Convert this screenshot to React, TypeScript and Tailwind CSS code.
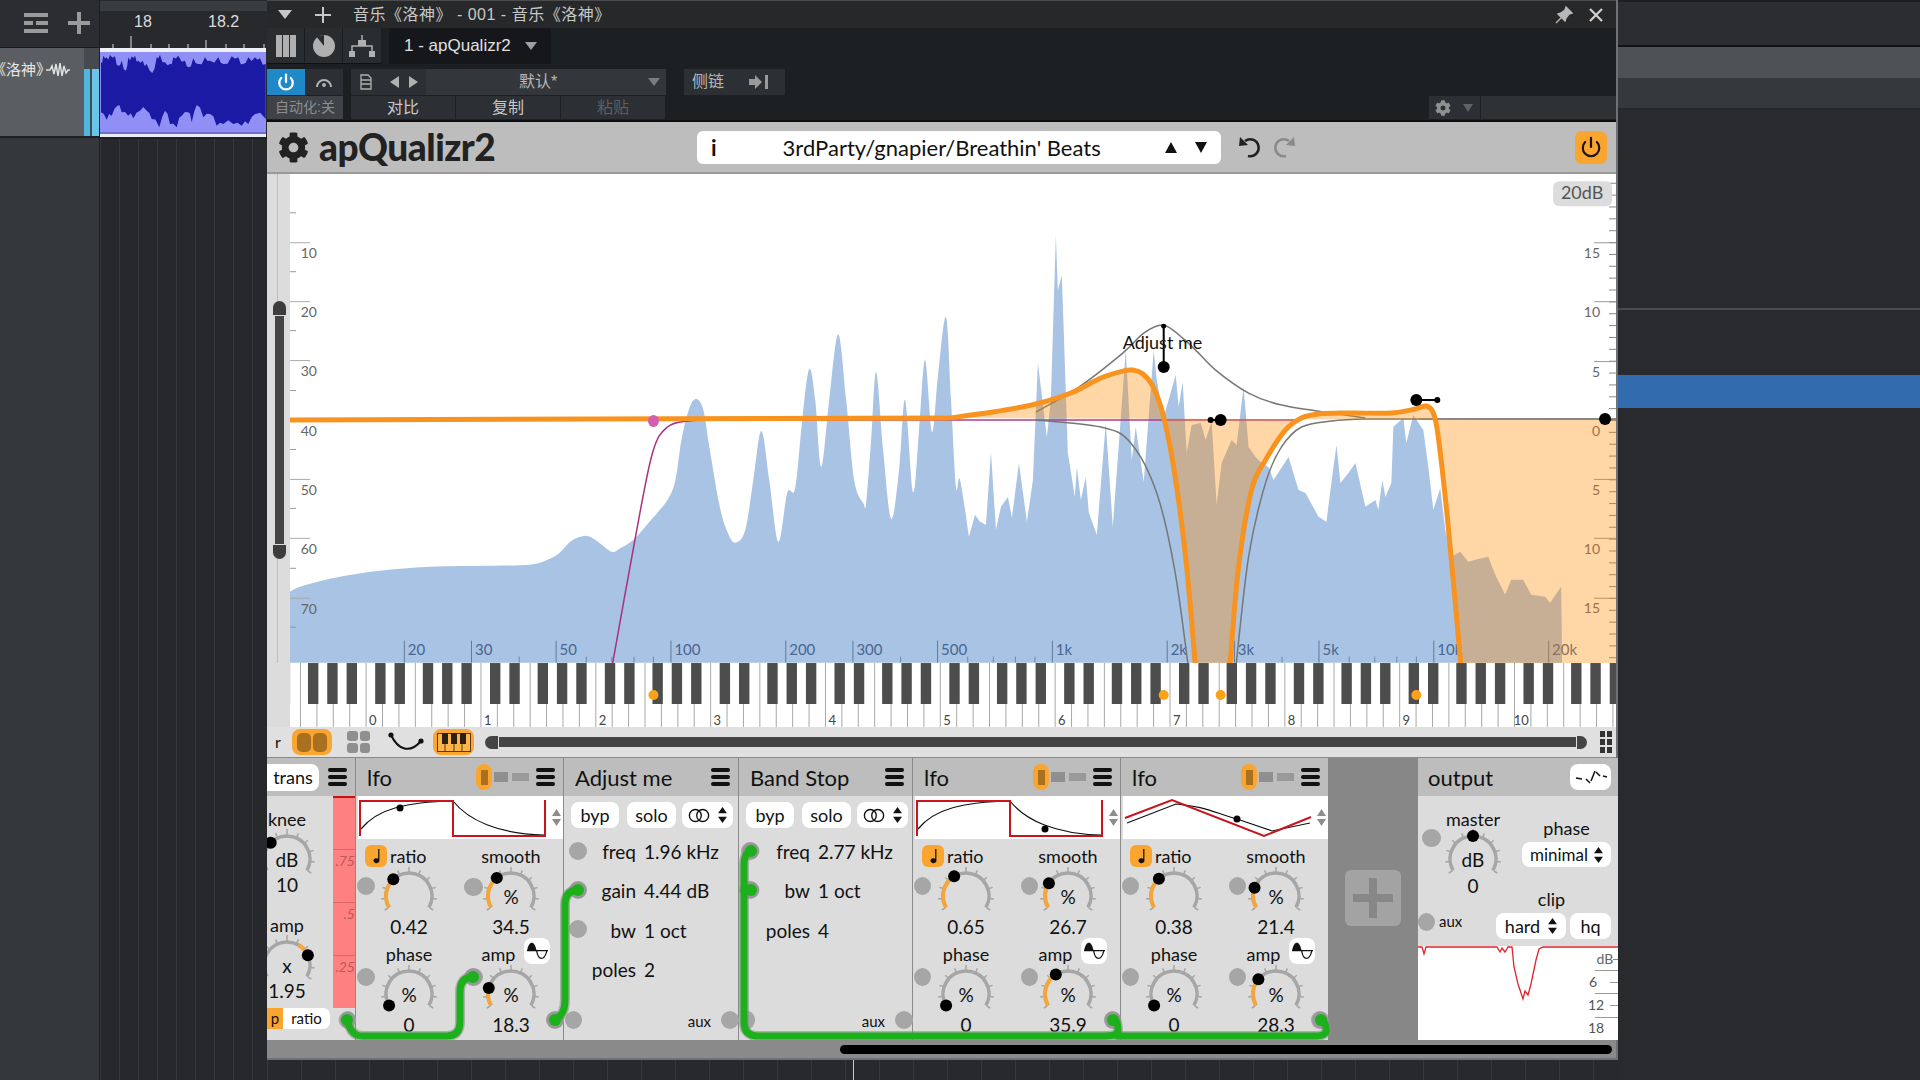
import { Power } from "lucide-react";
import { FaCog } from "react-icons/fa";

type Pt = number[];

// Catmull-Rom through the points
const curve = (p: Pt[]) => {
  let d = `M${p[0][0]} ${p[0][1]}`;
  for (let i = 0; i < p.length - 1; i++) {
    const a = p[Math.max(i - 1, 0)];
    const b = p[i];
    const c = p[i + 1];
    const e = p[Math.min(i + 2, p.length - 1)];
    d += ` C${(b[0] + (c[0] - a[0]) / 6).toFixed(1)} ${(b[1] + (c[1] - a[1]) / 6).toFixed(1)} ${(c[0] - (e[0] - b[0]) / 6).toFixed(1)} ${(c[1] - (e[1] - b[1]) / 6).toFixed(1)} ${c[0]} ${c[1]}`;
  }
  return d;
};
const line = (p: Pt[]) => p.map((q) => `L${q[0]} ${q[1]}`).join(" ");

const spectrumSmooth: Pt[] = [
  [290, 592], [303, 586], [340, 577], [380, 571], [430, 567], [490, 566], [530, 565], [548, 560], [560, 553], [572, 541], [586, 536], [597, 541], [612, 552], [620, 549], [634, 540], [650, 522], [668, 500], [676, 480], [682, 440], [690, 408], [697, 399], [704, 410], [710, 447], [720, 505], [728, 532], [736, 543], [746, 530], [754, 480], [762, 431], [770, 480], [779, 542], [788, 493], [796, 488], [803, 420], [810, 369], [816, 400], [822, 467], [830, 400], [839, 334], [847, 400], [855, 480], [864, 503], [867, 503], [872, 440], [877, 372], [884, 450], [892, 519], [900, 470], [906, 400], [914, 492], [920, 430], [926, 360], [933, 432], [939, 375], [947, 317], [952, 400], [957, 487], [961, 480], [970, 537],
];
const spectrumJagged: Pt[] = [
  [976, 515], [981, 522], [987, 525], [992, 452], [997, 530], [1002, 507], [1009, 497], [1013, 518], [1020, 463], [1028, 522], [1034, 480], [1039, 363], [1048, 437], [1052, 400], [1057, 235], [1059, 290], [1063, 275], [1069, 453], [1076, 497], [1078, 467], [1082, 500], [1087, 477], [1090, 513], [1098, 535], [1107, 423], [1114, 527], [1127, 350], [1133, 460], [1137, 427], [1145, 482], [1155, 350], [1158, 380], [1165, 417], [1177, 375], [1180, 407], [1184, 382], [1188, 453], [1193, 425], [1202, 423], [1207, 440], [1213, 422], [1218, 505], [1223, 463], [1233, 440], [1238, 445], [1245, 387], [1250, 447], [1257, 457], [1263, 463], [1270, 467], [1275, 480], [1290, 457], [1300, 490], [1307, 493], [1320, 517], [1328, 522], [1332, 490], [1338, 445], [1342, 483], [1350, 473], [1357, 463], [1367, 507], [1377, 500], [1380, 510], [1384, 480], [1387, 497], [1393, 483], [1395, 427], [1405, 418], [1408, 443], [1415, 415], [1425, 430], [1430, 467], [1435, 510], [1442, 488], [1447, 530], [1453, 557], [1462, 552], [1470, 562], [1477, 560], [1490, 557], [1497, 575], [1507, 595], [1513, 580], [1525, 580], [1533, 595], [1547, 597], [1552, 603], [1563, 587], [1564, 663],
];
const eqFall: Pt[] = [
  [950, 418], [994, 412], [1037, 404], [1072, 393], [1102, 378], [1124, 371], [1134, 370], [1143, 373], [1154, 386], [1165, 417], [1177, 480], [1188, 567], [1197, 670],
];
const eqRise: Pt[] = [
  [1231, 670], [1240, 567], [1253, 490], [1267, 460], [1287, 430], [1303, 418], [1320, 414], [1350, 413], [1393, 413], [1417, 409], [1428, 406], [1435, 413], [1440, 437], [1450, 527], [1463, 670],
];
const highpass: Pt[] = [[612, 670], [636, 537], [653, 453], [668, 427], [690, 421], [720, 420]];
const stopFall: Pt[] = [[1037, 420], [1102, 427], [1132, 443], [1158, 493], [1176, 570], [1190, 670]];
const stopRise: Pt[] = [[1237, 670], [1250, 557], [1267, 483], [1283, 447], [1303, 427], [1333, 421], [1367, 419], [1420, 419]];
const peak: Pt[] = [[1037, 412], [1080, 387], [1124, 353], [1145, 333], [1165, 325], [1184, 338], [1197, 350], [1217, 370], [1250, 393], [1283, 405], [1333, 413], [1367, 418]];

const freqX = (f: number) => 404 + Math.log10(f / 20) * 382;
const xLabels: [number, string][] = [
  [20, "20"], [30, "30"], [50, "50"], [100, "100"], [200, "200"], [300, "300"], [500, "500"], [1000, "1k"], [2000, "2k"], [3000, "3k"], [5000, "5k"], [10000, "10k"], [20000, "20k"],
];
const xMinor = [40, 60, 70, 80, 90, 400, 600, 700, 800, 900, 4000, 6000, 7000, 8000, 9000];

const minorDb = Array.from({ length: 41 }, (_, i) => 420 + (i - 20) * 11.88);

const Chart = () => (
  <svg viewBox="290 174 1328 489" className="block w-[1328px] h-[489px] bg-white">
    <path d={`${curve(spectrumSmooth)} ${line(spectrumJagged)} L290 663 Z`} fill="#a8c3e3" />
    {[212, 271, 330, 390, 449, 508, 568, 627].map((y) => (
      <rect key={y} x="290" y={y} width="6" height="1" fill="#999" />
    ))}
    {[242, 301, 360, 479, 538, 598].map((y) => (
      <rect key={y} x="290" y={y} width="20" height="1" fill="#aaa" />
    ))}
    {[["10", 253], ["20", 312], ["30", 371], ["40", 431], ["50", 490], ["60", 549], ["70", 609]].map(([t, y]) => (
      <text key={t} x="317" y={Number(y) + 5} textAnchor="end" fontSize="14" fill="#666">{t}</text>
    ))}
    {minorDb.map((y) => (
      <rect key={y} x="1611" y={y} width="7" height="1" fill="#888" />
    ))}
    {[242, 301, 361, 479, 538, 598].map((y) => (
      <rect key={y} x="1596" y={y} width="22" height="1" fill="#999" />
    ))}
    {[["15", 253], ["10", 312], ["5", 372], ["0", 431], ["5", 490], ["10", 549], ["15", 608]].map(([t, y], i) => (
      <text key={i} x="1602" y={Number(y) + 5} textAnchor="end" fontSize="14" fill="#666">{t}</text>
    ))}
    {xLabels.map(([f, t]) => (
      <g key={t}>
        <rect x={freqX(f)} y="641" width="1" height="22" fill="#5f7a9e" />
        <text x={freqX(f) + 4} y="655" fontSize="15" fill="#4a6690">{t}</text>
      </g>
    ))}
    {xMinor.map((f) => (
      <rect key={f} x={freqX(f)} y="657" width="1" height="6" fill="#6f88a8" />
    ))}
    <path d="M720 420 L1300 420" stroke="#b03a8e" strokeWidth="1.5" />
    <path d={curve(highpass)} fill="none" stroke="#a8327f" strokeWidth="1.5" />
    <path d={curve(stopFall)} fill="none" stroke="#777" strokeWidth="1.5" />
    <path d={curve(stopRise)} fill="none" stroke="#777" strokeWidth="1.5" />
    <path d={curve(peak)} fill="none" stroke="#777" strokeWidth="1.5" />
    <path d="M1420 419 L1618 419" stroke="#888" strokeWidth="2" />
    <path
      d={`${curve(eqFall)} ${curve(eqRise).replace("M", "L")} L1618 670 L1618 420 Z`}
      fill="#ff8a00"
      fillOpacity="0.35"
    />
    <path d="M290 420 L950 418" stroke="#f7931e" strokeWidth="5" fill="none" />
    <path d={curve(eqFall)} fill="none" stroke="#f7931e" strokeWidth="5" />
    <path d={curve(eqRise)} fill="none" stroke="#f7931e" strokeWidth="5" />
    <ellipse cx="654" cy="421" rx="5.5" ry="6" fill="#d45fb0" />
    <rect x="1164" y="325" width="2" height="42" fill="#000" />
    <circle cx="1165" cy="326" r="2.5" fill="#000" />
    <circle cx="1165" cy="367" r="6" fill="#000" />
    <circle cx="1212" cy="420" r="3" fill="#000" />
    <rect x="1212" y="419" width="8" height="2" fill="#000" />
    <circle cx="1222" cy="420" r="6" fill="#000" />
    <circle cx="1418" cy="400" r="6" fill="#000" />
    <rect x="1418" y="399" width="21" height="2" fill="#000" />
    <circle cx="1439" cy="400" r="3" fill="#000" />
    <circle cx="1607" cy="419" r="6" fill="#000" />
    <text x="1124" y="349" fontSize="18" fill="#111">Adjust me</text>
    <rect x="1555" y="181" width="59" height="25" rx="6" fill="#dcdcdc" />
    <text x="1584" y="199" textAnchor="middle" fontSize="18" fill="#555">20dB</text>
  </svg>
);

const blackOffsets = [0, 19.3, 38.7, 67.3, 86.7];
const Keyboard = () => (
  <svg viewBox="290 663 1328 64" className="block w-[1328px] h-[64px] bg-white">
    {Array.from({ length: 82 }, (_, i) => (
      <rect key={i} x={300 + i * 16.43} y="663" width="1" height="64" fill="#a8a8a8" />
    ))}
    {Array.from({ length: 13 }, (_, o) =>
      blackOffsets.map((b) => (
        <rect key={`${o}-${b}`} x={193 + o * 115 + b} y="663" width="10.4" height="41" fill="#4d4d4d" />
      )),
    )}
    {Array.from({ length: 11 }, (_, i) => (
      <text key={i} x={373 + i * 115} y="725" textAnchor="middle" fontSize="13" fill="#444">{i}</text>
    ))}
    {[654, 1165, 1222, 1418].map((x) => (
      <circle key={x} cx={x} cy="695" r="5" fill="#f9a21a" />
    ))}
  </svg>
);

const Burger = () => (
  <div className="flex flex-col gap-[3px] w-[19px] shrink-0">
    <div className="h-[4px] rounded-full bg-[#111]" />
    <div className="h-[4px] rounded-full bg-[#111]" />
    <div className="h-[4px] rounded-full bg-[#111]" />
  </div>
);

const polar = (r: number, deg: number) => {
  const a = (deg * Math.PI) / 180;
  return [32 + r * Math.sin(a), 29 - r * Math.cos(a)];
};
const arc = (r: number, from: number, to: number) => {
  const [x1, y1] = polar(r, from);
  const [x2, y2] = polar(r, to);
  return `M${x1.toFixed(2)} ${y1.toFixed(2)} A${r} ${r} 0 ${to - from > 180 ? 1 : 0} 1 ${x2.toFixed(2)} ${y2.toFixed(2)}`;
};

const Knob = ({ angle, from = -120, text, cut = false }: { angle: number; from?: number; text?: string; cut?: boolean }) => (
  <svg viewBox={`0 0 64 ${cut ? 45 : 50}`} className={cut ? "block w-[64px] h-[45px] overflow-visible" : "block w-[64px] h-[50px]"}>
    <path d={arc(23, -120, 120)} fill="none" stroke="#a6a6a6" strokeWidth="3.5" />
    {Array.from({ length: 11 }, (_, i) => {
      const a = -120 + i * 24;
      const [x1, y1] = polar(24, a);
      const [x2, y2] = polar(i === 5 ? 30 : 28, a);
      return <line key={i} x1={x1} y1={y1} x2={x2} y2={y2} stroke="#a6a6a6" strokeWidth="1.5" />;
    })}
    {angle !== from && <path d={arc(23, Math.min(from, angle), Math.max(from, angle))} fill="none" stroke="#f4a63a" strokeWidth="4" />}
    {text && (
      <text x="32" y="37" textAnchor="middle" fontSize="19" fill="#111">{text}</text>
    )}
    <circle cx={polar(23, angle)[0]} cy={polar(23, angle)[1]} r="6" fill="#000" />
  </svg>
);

const SortArrows = ({ color = "#111" }: { color?: string }) => (
  <svg viewBox="0 0 10 18" className="w-[9px] h-[16px] shrink-0">
    <path d="M5 0 L10 7 L0 7 Z M5 18 L10 11 L0 11 Z" fill={color} />
  </svg>
);

const WaveIcon = () => (
  <svg viewBox="0 0 24 20" className="w-[23px] h-[19px]">
    <path d="M1 9 C3 -2 9 -2 11 9 Z" fill="#111" />
    <path d="M1 9 L23 9 M11 9 C13 20 19 20 22 9" fill="none" stroke="#111" strokeWidth="1.3" />
  </svg>
);

type LfoProps = {
  kind: "step" | "step2" | "tri";
  ratio: [number, string];
  smooth: [number, string];
  amp: [number, string];
};

const LfoShape = ({ kind }: { kind: LfoProps["kind"] }) => (
  <svg viewBox="0 0 206 43" className="block w-[206px] h-[43px] ml-[2px] bg-white">
    {kind === "tri" ? (
      <>
        <path d="M4 27 L53 8 C80 10 90 16 114 23 L149 35 L187 27" fill="none" stroke="#111" strokeWidth="1.2" />
        <path d="M2 22 L49 4 L141 40 L188 21" fill="none" stroke="#c8141c" strokeWidth="2" />
        <circle cx="114" cy="23" r="3.5" fill="#000" />
      </>
    ) : (
      <>
        <path d="M3 33 C20 12 50 6 95 5 C110 24 140 38 186 39" fill="none" stroke="#111" strokeWidth="1.2" />
        <path d="M2 40 L2 5 L95 5 L95 40 L187 40 L187 4" fill="none" stroke="#c8141c" strokeWidth="2" />
        {kind === "step" ? <circle cx="42" cy="12" r="3.5" fill="#000" /> : <circle cx="130" cy="33" r="3.5" fill="#000" />}
      </>
    )}
    <g transform="translate(194 13)">
      <path d="M4.5 0 L9 7 L0 7 Z M4.5 17 L9 10 L0 10 Z" fill="#8c8c8c" />
    </g>
  </svg>
);

const Lfo = ({ kind, ratio, smooth, amp, last = false }: LfoProps & { last?: boolean }) => (
  <div className={`${last ? "w-[207px]" : "w-[208px] border-r-[1.5px] border-[#8a8a8a]"} h-full flex flex-col shrink-0 overflow-hidden`}>
    <div className="h-[38px] bg-[#bdbdbd] flex items-center pl-[11px] pr-[8px] shrink-0">
      <span className="text-[22px]">lfo</span>
      <div className="ml-auto w-[16px] h-[26px] rounded-full bg-[#f9a52f] flex items-center justify-center">
        <div className="w-[7px] h-[15px] bg-[#a8701f]" />
      </div>
      <div className="ml-[2px] w-[14px] h-[10px] bg-[#8f8f8f]" />
      <div className="ml-[4px] w-[17px] h-[8px] bg-[#9a9a9a]" />
      <div className="ml-[7px]"><Burger /></div>
    </div>
    <div className="flex-1 bg-[#dcdcdc]">
      <LfoShape kind={kind} />
      <div className="grid grid-cols-[102px_102px] pl-[2px] mt-[6px] text-[18px] leading-[22px]">
        <div className="flex flex-col items-center">
          <div className="h-[22px] w-full flex items-center pl-[7px] gap-[3px]">
            <div className="w-[22px] h-[22px] rounded-[6px] bg-[#f9a52f] flex items-center justify-center">
              <svg viewBox="0 0 12 18" className="w-[11px] h-[15px]">
                <path d="M8 0 L9.5 0 L9.5 14 A3.6 3 0 1 1 8 11.6 Z" fill="#111" />
              </svg>
            </div>
            <span>ratio</span>
          </div>
          <Knob angle={ratio[0]} />
          <div className="h-[20px] text-[19px] leading-[20px]">{ratio[1]}</div>
          <div className="mt-[6px] h-[22px]">phase</div>
          <Knob angle={-120} text="%" />
          <div className="h-[20px] text-[19px] leading-[20px]">0</div>
        </div>
        <div className="flex flex-col items-center">
          <div className="h-[22px]">smooth</div>
          <Knob angle={smooth[0]} text="%" />
          <div className="h-[20px] text-[19px] leading-[20px]">{smooth[1]}</div>
          <div className="mt-[6px] h-[22px] w-full flex items-center justify-center gap-[9px] pl-[10px]">
            <span>amp</span>
            <div className="w-[26px] h-[26px] -mt-[6px] rounded-[8px] bg-white flex items-center justify-center">
              <WaveIcon />
            </div>
          </div>
          <Knob angle={amp[0]} text="%" />
          <div className="h-[20px] text-[19px] leading-[20px]">{amp[1]}</div>
        </div>
      </div>
    </div>
  </div>
);

const StereoBtn = ({ w }: { w: string }) => (
  <div className={`${w} h-[26px] rounded-[8px] bg-white flex items-center justify-center gap-[8px]`}>
    <svg viewBox="0 0 24 16" className="w-[22px] h-[15px]">
      <circle cx="8" cy="8" r="6.5" fill="none" stroke="#111" strokeWidth="1.5" />
      <circle cx="16" cy="8" r="6.5" fill="none" stroke="#111" strokeWidth="1.5" />
    </svg>
    <SortArrows />
  </div>
);

const Band = ({
  title,
  width,
  labelW,
  gap,
  rows,
}: {
  title: string;
  width: string;
  labelW: string;
  gap: string;
  rows: [string, string][];
}) => (
  <div className={`${width} h-full flex flex-col shrink-0 border-r-[1.5px] border-[#8a8a8a]`}>
    <div className="h-[38px] bg-[#bdbdbd] flex items-center pl-[11px] pr-[8px] shrink-0">
      <span className="text-[22px]">{title}</span>
      <div className="ml-auto"><Burger /></div>
    </div>
    <div className="flex-1 bg-[#dcdcdc] flex flex-col text-[19px]">
      <div className="flex mt-[6px] pl-[7px] text-[18px]">
        <div className="w-[48px] h-[26px] rounded-[8px] bg-white flex items-center justify-center">byp</div>
        <div className="ml-[8px] w-[49px] h-[26px] rounded-[8px] bg-white flex items-center justify-center">solo</div>
        <div className="ml-[6px]"><StereoBtn w="w-[51px]" /></div>
      </div>
      <div className="mt-[4px]">
        {rows.map(([label, value]) => (
          <div key={label} className="h-[39.5px] flex items-center">
            <div className={`${labelW} text-right`}>{label}</div>
            <div className={gap}>{value}</div>
          </div>
        ))}
      </div>
      <div className="mt-auto mb-[9px] pr-[27px] text-right text-[15px] leading-[20px]">aux</div>
    </div>
  </div>
);

// gray sockets and the green patch cables lie on top of the modules
const ports: number[][] = [
  [340, 356, 1020], [357, 375, 886], [464, 483, 887], [357, 375, 977], [464, 483, 977], [546, 564, 1020],
  [569, 587, 851], [569, 587, 890], [569, 587, 929], [565, 582, 1020], [721, 739, 1020],
  [741, 759, 851], [741, 759, 890], [741, 755, 1020], [895, 913, 1020],
  [914, 931, 886], [1021, 1038, 886], [914, 931, 977], [1021, 1038, 977], [1104, 1121, 1020],
  [1122, 1139, 886], [1229, 1246, 886], [1122, 1139, 977], [1229, 1246, 977], [1311, 1328, 1020],
  [1422, 1441, 838], [1418, 1435, 922],
];
const cables = [
  "M347 1020 Q351 1036 362 1036 L447 1036 Q460 1036 460 1022 L460 992 Q460 977 473 977",
  "M555 1020 Q565 1015 565 1000 L565 905 Q565 890 578 890",
  "M751 851 Q744 853 744 865 L744 1022 Q744 1036 758 1036 L1105 1036 Q1118 1036 1118 1030 Q1118 1020 1113 1020",
  "M751 890 L744 890",
  "M1118 1036 L1315 1036 Q1328 1036 1326 1028 Q1325 1020 1321 1020",
];
const plugs = [[347, 1020], [473, 977], [555, 1020], [578, 890], [751, 851], [751, 890], [1113, 1020], [1321, 1020]];

const Overlay = () => (
  <svg viewBox="267 758 1351 282" className="absolute left-0 top-0 w-[1351px] h-[282px] pointer-events-none">
    {ports.map(([a, b, y]) => (
      <rect key={`${a}-${y}`} x={a} y={y - 9} width={b - a} height="18" rx="9" fill="#a6a6a6" />
    ))}
    {cables.map((d) => (
      <path key={d} d={d} fill="none" stroke="#8f8f8f" strokeOpacity="0.6" strokeWidth="10" strokeLinecap="round" />
    ))}
    {plugs.map(([x, y]) => (
      <circle key={`${x}-${y}`} cx={x} cy={y} r="8.5" fill="#8f8f8f" fillOpacity="0.6" />
    ))}
    {cables.map((d) => (
      <path key={d} d={d} fill="none" stroke="#1cb01c" strokeWidth="7" strokeLinecap="round" />
    ))}
    {plugs.map(([x, y]) => (
      <circle key={`${x}-${y}`} cx={x} cy={y} r="6" fill="#1cb01c" />
    ))}
  </svg>
);

const gainDips: Pt[] = [
  [0, 1], [4, 1], [6, 8], [8, 1], [79, 1], [82, 6], [84, 2], [87, 6], [90, 1], [94, 1], [96, 21], [100, 38], [105, 53], [107, 45], [110, 49], [113, 38], [118, 14], [121, 3], [125, 1], [200, 1],
];

const Output = () => (
  <div className="w-[200px] h-full flex flex-col shrink-0">
    <div className="h-[38px] bg-[#bdbdbd] flex items-center pl-[10px] pr-[7px] shrink-0">
      <span className="text-[22px]">output</span>
      <div className="ml-auto w-[41px] h-[26px] rounded-[8px] bg-white flex items-center justify-center">
        <svg viewBox="0 0 34 16" className="w-[34px] h-[16px]">
          <path d="M2 9 L8 10 M12 10 L16 14 M17 12 L21 2 M22 3 L26 7 M29 7 L33 8" fill="none" stroke="#111" strokeWidth="1.5" />
        </svg>
      </div>
    </div>
    <div className="h-[150px] bg-[#dcdcdc] flex text-[18px] leading-[22px]">
      <div className="w-[104px] pl-[6px] pt-[12px] flex flex-col items-center">
        <div className="h-[22px]">master</div>
        <Knob angle={0} from={0} text="dB" cut />
        <div className="h-[20px] mt-px text-[19px] leading-[20px]">0</div>
        <div className="mt-[15px] h-[20px] w-full pl-[15px] text-[15px] leading-[20px]">aux</div>
      </div>
      <div className="w-[89px] pt-[21px] flex flex-col items-center">
        <div className="h-[22px]">phase</div>
        <div className="mt-[3px] w-[89px] h-[25px] rounded-[8px] bg-white flex items-center justify-center gap-[6px] text-[17px]">
          minimal
          <SortArrows />
        </div>
        <div className="mt-[21px] h-[22px] pr-[30px]">clip</div>
        <div className="mt-[3px] flex gap-[4px] -ml-[26px]">
          <div className="w-[70px] h-[26px] rounded-[8px] bg-white flex items-center justify-center gap-[8px]">
            hard
            <SortArrows />
          </div>
          <div className="w-[41px] h-[26px] rounded-[8px] bg-white flex items-center justify-center">hq</div>
        </div>
      </div>
    </div>
    <div className="flex-1 bg-white">
      <svg viewBox="0 0 200 94" className="block w-[200px] h-[94px]">
        <path d={`M${gainDips.map((p) => p.join(" ")).join(" L")}`} fill="none" stroke="#e0242c" strokeWidth="1.3" />
        <text x="187" y="18" textAnchor="middle" fontSize="14" fill="#666">dB</text>
        <rect x="195" y="13" width="5" height="1" fill="#888" />
        {[24, 47, 71].map((y) => (
          <rect key={y} x="177" y={y} width="23" height="1" fill="#999" />
        ))}
        {[36, 59].map((y) => (
          <rect key={y} x="192" y={y} width="8" height="1" fill="#999" />
        ))}
        <text x="175" y="41" textAnchor="middle" fontSize="14" fill="#555">6</text>
        <text x="178" y="64" textAnchor="middle" fontSize="14" fill="#555">12</text>
        <text x="178" y="87" textAnchor="middle" fontSize="14" fill="#555">18</text>
      </svg>
    </div>
  </div>
);

const Trans = () => (
  <div className="w-[89px] h-full flex flex-col shrink-0 overflow-hidden border-r-[1.5px] border-[#8a8a8a]">
    <div className="h-[38px] bg-[#bdbdbd] flex items-center pr-[8px] shrink-0">
      <div className="w-[53px] h-[27px] rounded-r-[8px] bg-white flex items-center justify-center text-[18px]">trans</div>
      <div className="ml-[9px]"><Burger /></div>
    </div>
    <div className="flex-1 bg-[#dcdcdc] flex">
      <div className="w-[66px] flex flex-col text-[18px] leading-[22px]">
        <div className="w-[40px] flex flex-col items-center pt-[12px]">
          <div className="h-[22px]">knee</div>
          <div className="h-[45px] w-[64px] shrink-0"><Knob angle={-45} from={-45} text="dB" cut /></div>
          <div className="h-[20px] text-[19px] leading-[20px]">10</div>
          <div className="mt-[19px] h-[22px]">amp</div>
          <div className="h-[45px] w-[64px] shrink-0"><Knob angle={65} from={30} text="x" cut /></div>
          <div className="h-[20px] text-[19px] leading-[20px]">1.95</div>
        </div>
        <div className="mt-[7px] flex h-[21px] text-[15px]">
          <div className="w-[16px] bg-[#f9a52f] text-center leading-[21px]">p</div>
          <div className="w-[47px] bg-white rounded-r-[7px] text-center leading-[21px]">ratio</div>
        </div>
      </div>
      <div className="w-[22px] h-[212px] bg-[#ff8080] border-t-2 border-[#cc1111] pt-[51px] text-[14px] italic text-[#b85a5a] text-right">
        <div className="h-[53px] border-t border-[#d96b6b] leading-[22px]">.75</div>
        <div className="h-[53px] border-t border-[#d96b6b] leading-[22px]">.5</div>
        <div className="h-[53px] border-t border-[#d96b6b] leading-[22px]">.25</div>
      </div>
    </div>
  </div>
);

const DarkBtn = ({ w, children, className = "" }: { w: string; children?: React.ReactNode; className?: string }) => (
  <div className={`${w} h-full flex items-center justify-center shrink-0 ${className}`}>{children}</div>
);

const waveTop = [[303, 190], [310, 170], [320, 175], [330, 168], [345, 172], [355, 200], [365, 185], [378, 215], [385, 175], [395, 172], [405, 170], [415, 185], [428, 185], [440, 195], [457, 222], [470, 175], [480, 168], [495, 190], [510, 195], [520, 175], [535, 170], [555, 185], [565, 205], [580, 178], [595, 195], [615, 175], [630, 185], [655, 175], [670, 195], [695, 172], [715, 175], [730, 195], [745, 175], [765, 175], [780, 178], [797, 195]];
const waveBottom = [[797, 360], [765, 345], [745, 375], [725, 380], [700, 375], [670, 375], [650, 380], [630, 345], [610, 355], [590, 318], [575, 370], [565, 340], [545, 350], [530, 385], [510, 375], [495, 335], [478, 385], [455, 360], [440, 335], [420, 335], [400, 358], [385, 350], [365, 340], [352, 320], [335, 350], [320, 362], [303, 340]];

// a bit of roughness between the traced points
const rough = (pts: number[][], sign: number) =>
  pts.flatMap((p, i) => {
    const n = pts[i + 1];
    if (!n) return [p];
    return [p, [(p[0] + n[0]) / 2, (p[1] + n[1]) / 2 + sign * (i % 2 ? 6 : 11)]];
  });

const Track = () => (
  <svg viewBox="0 0 166 89" className="block w-[166px] h-[89px]">
    <rect width="166" height="89" fill="#8f8ff5" />
    <rect width="166" height="4" fill="#f0f0f8" />
    <rect y="84" width="166" height="2" fill="#6f6fd0" />
    <rect y="86" width="166" height="3" fill="#ecebfa" />
    <path
      d={`M${[...rough(waveTop, 1), ...rough(waveBottom, -1)].map(([x, y]) => `${((x - 300) / 3).toFixed(1)} ${(y / 3 - 49).toFixed(1)}`).join(" L")} Z`}
      fill="#1a1aa4"
    />
  </svg>
);

export default function App() {
  return (
    <div className="w-[1920px] h-[1080px] overflow-hidden flex bg-[#292a2e] font-[Lato,'Noto_Sans_CJK_SC',sans-serif] text-[#111]">
      {/* track column */}
      <div className="w-[100px] h-full shrink-0 flex flex-col bg-[#34383c] border-r border-[#1d1e20]">
        <div className="h-[48px] bg-[#2b2d30] border-b border-[#18191b] flex items-center justify-end gap-[20px] pr-[9px] pb-[1px]">
          <svg viewBox="0 0 24 20" className="w-[24px] h-[20px]">
            <path d="M0 0 H24 V4 H0 Z M0 8 H9 V12 H0 Z M12 8 H24 V12 H12 Z M0 16 H24 V20 H0 Z" fill="#9a9a9a" />
          </svg>
          <svg viewBox="0 0 22 22" className="w-[22px] h-[22px]">
            <path d="M9 0 H13 V9 H22 V13 H13 V22 H9 V13 H0 V9 H9 Z" fill="#9a9a9a" />
          </svg>
        </div>
        <div className="h-[90px] bg-[#5a5e63] border-b-2 border-[#1f2022] flex">
          <div className="w-[85px] pt-[12px] overflow-hidden whitespace-nowrap flex items-start justify-end">
            <span className="text-[15px] leading-[20px] text-[#e8e8e8] font-['Liberation_Sans','Noto_Sans_CJK_SC',sans-serif]">
              <span className="-ml-[7px] inline-block">《</span>洛神<span className="-mr-[7px] inline-block">》</span>
            </span>
            <svg viewBox="0 0 24 18" className="w-[24px] h-[18px] mt-[1px] ml-[2px] mr-[14px] shrink-0">
              <path d="M0 9 H4 L6 5 L8 13 L10 3 L12 15 L14 2 L16 15 L18 5 L20 12 L22 9 H24" fill="none" stroke="#e0e0e0" strokeWidth="1.5" />
            </svg>
          </div>
          <div className="flex-1 bg-[#46494d] flex gap-[2px] pt-[21px]">
            <div className="w-[6px] bg-[#4fb6e0]" />
            <div className="w-[7px] bg-[#68c6ea]" />
          </div>
        </div>
      </div>

      {/* arrangement */}
      <div className="w-[167px] h-full shrink-0 flex flex-col bg-[#26282b] bg-[repeating-linear-gradient(90deg,#36383c_0,#36383c_1px,transparent_1px,transparent_19px)]">
        <div className="h-[48px] flex flex-col bg-[#28292c]">
          <div className="h-[10px] mt-[1px] bg-[#3a3d40]" />
          <div className="flex-1 flex pt-[1px] text-[#dcdcdc] text-[16px] font-['Liberation_Sans',sans-serif]">
            <div className="ml-[34px] w-[40px] leading-[20px]">18</div>
            <div className="ml-[34px] leading-[20px]">18.2</div>
          </div>
          <svg viewBox="0 0 166 12" className="block w-[166px] h-[12px]">
            <path d="M13 8V12 M31 0V12 M51 8V12 M69 8V12 M88 8V12 M106 4V12 M126 8V12 M144 8V12 M164 8V12" stroke="#dcdcdc" strokeWidth="1" />
          </svg>
        </div>
        <Track />
        <div className="h-[2px] bg-[#1f2022]" />
      </div>

      {/* plugin window */}
      <div className="w-[1351px] h-full shrink-0 flex flex-col">
        <div className="h-[1060px] flex flex-col border-r-2 border-[#6f7174] relative">
          <div className="h-[28px] bg-[#26282a] flex items-center text-[#c8c8c8] font-['Liberation_Sans','Noto_Sans_CJK_SC',sans-serif] text-[16px] tracking-[0.5px] border-t border-[#4a4c4e]">
            <svg viewBox="0 0 14 9" className="ml-[11px] w-[14px] h-[9px]">
              <path d="M0 0 H14 L7 9 Z" fill="#c8c8c8" />
            </svg>
            <svg viewBox="0 0 16 16" className="ml-[23px] w-[16px] h-[16px]">
              <path d="M7 0 H9 V7 H16 V9 H9 V16 H7 V9 H0 V7 H7 Z" fill="#c8c8c8" />
            </svg>
            <span className="ml-[22px]">音乐《洛神》 - 001 - 音乐《洛神》</span>
            <svg viewBox="0 0 18 18" className="ml-auto w-[18px] h-[18px]">
              <path d="M11 1 L17 7 L14 8 L11 12 L10 15 L3 8 L6 7 L10 4 Z M6 12 L1 17" fill="#b8b8b8" stroke="#b8b8b8" strokeWidth="1.4" />
            </svg>
            <svg viewBox="0 0 14 14" className="ml-[16px] mr-[13px] w-[14px] h-[14px]">
              <path d="M1 1 L13 13 M13 1 L1 13" stroke="#d0d0d0" strokeWidth="2.2" />
            </svg>
          </div>

          <div className="flex-1 min-h-0 flex flex-col bg-[#1d2023]">
            <div className="h-[41px] flex items-start shrink-0">
              <div className="h-[36px] w-[114px] flex bg-[#2a2d30] border-b border-[#111]">
                <DarkBtn w="w-[38px]" className="border-r border-[#1b1c1e]">
                  <div className="flex gap-[1px]">
                    <div className="w-[6px] h-[22px] bg-[#b0b0b0]" />
                    <div className="w-[6px] h-[22px] bg-[#b0b0b0]" />
                    <div className="w-[6px] h-[22px] bg-[#b0b0b0]" />
                  </div>
                </DarkBtn>
                <DarkBtn w="w-[38px]" className="border-r border-[#1b1c1e]">
                  <svg viewBox="0 0 22 22" className="w-[22px] h-[22px]">
                    <circle cx="11" cy="11" r="11" fill="#b0b0b0" />
                    <path d="M11 11 L3 1 L11 0 Z" fill="#2a2d30" />
                  </svg>
                </DarkBtn>
                <DarkBtn w="w-[38px]">
                  <svg viewBox="0 0 26 22" className="w-[26px] h-[22px]">
                    <path d="M13 0 V7 M3 17 V11 H23 V17" fill="none" stroke="#b0b0b0" strokeWidth="1.5" />
                    <path d="M9 5 H17 V11 H9 Z M0 16 H6 V22 H0 Z M20 16 H26 V22 H20 Z" fill="#b0b0b0" />
                  </svg>
                </DarkBtn>
              </div>
              <div className="ml-[8px] w-[162px] h-[36px] bg-[#15171a] flex items-center pl-[15px] text-[#e0e0e0] text-[17px] font-['Liberation_Sans',sans-serif]">
                1 - apQualizr2
                <svg viewBox="0 0 12 8" className="ml-[14px] w-[12px] h-[8px]">
                  <path d="M0 0 H12 L6 8 Z" fill="#a0a0a0" />
                </svg>
              </div>
            </div>

            <div className="h-[26px] flex shrink-0 text-[#c8c8c8] text-[16px] font-['Liberation_Sans','Noto_Sans_CJK_SC',sans-serif]">
              <DarkBtn w="w-[38px]" className="bg-[#1e88c9]">
                <Power size={18} strokeWidth={3} color="#ffffff" />
              </DarkBtn>
              <DarkBtn w="w-[38px]" className="bg-[#2c2f33]">
                <svg viewBox="0 0 20 12" className="w-[20px] h-[12px]">
                  <path d="M3 11 A7 7 0 0 1 17 11" fill="none" stroke="#b0b0b0" strokeWidth="2" />
                  <circle cx="10" cy="9" r="2" fill="#b0b0b0" />
                </svg>
              </DarkBtn>
              <DarkBtn w="w-[30px] ml-[8px]" className="bg-[#2c2f33]">
                <svg viewBox="0 0 12 16" className="w-[12px] h-[16px]">
                  <path d="M1 1 H8 L11 4 V15 H1 Z M1 6 H11 M1 10 H11" fill="none" stroke="#b0b0b0" strokeWidth="1.3" />
                </svg>
              </DarkBtn>
              <DarkBtn w="w-[45px]" className="bg-[#2c2f33] gap-[10px]">
                <svg viewBox="0 0 9 12" className="w-[9px] h-[12px]"><path d="M9 0 V12 L0 6 Z" fill="#b0b0b0" /></svg>
                <svg viewBox="0 0 9 12" className="w-[9px] h-[12px]"><path d="M0 0 V12 L9 6 Z" fill="#b0b0b0" /></svg>
              </DarkBtn>
              <div className="w-[240px] bg-[#33373b] flex items-center justify-center pr-[16px] relative">
                <span className="text-[#b8b8b8]">默认*</span>
                <svg viewBox="0 0 12 8" className="absolute right-[6px] w-[12px] h-[8px]">
                  <path d="M0 0 H12 L6 8 Z" fill="#7c7c7c" />
                </svg>
              </div>
              <div className="ml-[18px] w-[101px] bg-[#2c2f33] flex items-center pl-[8px] text-[#b8b8b8]">
                侧链
                <svg viewBox="0 0 20 14" className="ml-[25px] w-[20px] h-[14px]">
                  <path d="M0 4 H6 V0 L13 7 L6 14 V10 H0 Z M16 0 H19 V14 H16 Z" fill="#9a9a9a" />
                </svg>
              </div>
            </div>

            <div className="h-[23px] mt-[1px] flex shrink-0 text-[16px] text-[#c8c8c8] font-['Liberation_Sans','Noto_Sans_CJK_SC',sans-serif]">
              <DarkBtn w="w-[76px]" className="bg-[#3f4347] text-[#8a8e92] text-[14px]">自动化:关</DarkBtn>
              <DarkBtn w="w-[105px] ml-[8px]" className="bg-[#2c2f33] border-r border-[#1d2023]">对比</DarkBtn>
              <DarkBtn w="w-[105px]" className="bg-[#2c2f33] border-r border-[#1d2023]">复制</DarkBtn>
              <DarkBtn w="w-[104px]" className="bg-[#2c2f33] text-[#5b5f63]">粘贴</DarkBtn>
              <div className="ml-auto flex h-full">
                <DarkBtn w="w-[27px]" className="bg-[#2c2f33]"><FaCog size={16} color="#909090" /></DarkBtn>
                <DarkBtn w="w-[25px]" className="bg-[#2c2f33] border-r border-[#1d2023]">
                  <svg viewBox="0 0 10 8" className="w-[10px] h-[8px]"><path d="M0 0 H10 L5 8 Z" fill="#5f6265" /></svg>
                </DarkBtn>
                <div className="w-[135px] bg-[#2e3235]" />
              </div>
            </div>
            <div className="h-[2px] mt-[1px] bg-[#0c0d0e] shrink-0" />

            {/* plugin */}
            <div className="h-[52px] shrink-0 bg-[#bdbdbd] border-b-2 border-[#999] flex items-center relative">
              <FaCog size={31} color="#222" className="ml-[11px]" />
              <span className="ml-[10px] w-[184px] whitespace-nowrap text-[37px] font-black text-[#222] tracking-[-0.5px]">apQualizr2</span>
              <div className="ml-[194px] w-[524px] h-[33px] rounded-[6px] bg-white flex items-center text-[22px]">
                <span className="ml-[14px] font-bold">i</span>
                <span className="ml-[66px] whitespace-nowrap">3rdParty/gnapier/Breathin&apos; Beats</span>
                <svg viewBox="0 0 12 11" className="ml-auto w-[12px] h-[11px]"><path d="M6 0 L12 11 H0 Z" fill="#111" /></svg>
                <svg viewBox="0 0 12 11" className="ml-[18px] mr-[14px] w-[12px] h-[11px]"><path d="M6 11 L12 0 H0 Z" fill="#111" /></svg>
              </div>
              <svg viewBox="0 0 24 24" className="ml-[16px] w-[24px] h-[24px]">
                <path d="M8 6 A8.5 8.5 0 1 1 11 21" fill="none" stroke="#222" strokeWidth="2.6" />
                <path d="M3 2 L11 10 L2 11 Z" fill="#222" />
              </svg>
              <svg viewBox="0 0 24 24" className="ml-[12px] w-[24px] h-[24px]">
                <path d="M16 6 A8.5 8.5 0 1 0 13 21" fill="none" stroke="#8a8a8a" strokeWidth="2.6" />
                <path d="M21 2 L13 10 L22 11 Z" fill="#8a8a8a" />
              </svg>
              <div className="ml-auto mr-[9px] w-[32px] h-[33px] rounded-[7px] bg-[#f9a52f] flex items-center justify-center">
                <Power size={22} strokeWidth={2.4} color="#1d1408" />
              </div>
            </div>

            <div className="h-[489px] shrink-0 flex">
              <div className="w-[23px] bg-[#dcdcdc] flex flex-col pl-[6px]">
                <div className="ml-[4px] w-px h-[127px] bg-[#bdbdbd]" />
                <div className="w-[13px] h-[14px] rounded-t-full bg-[#3d3d3d]" />
                <div className="ml-[2px] mt-px w-[9px] h-[228px] bg-[#444]" />
                <div className="mt-px w-[13px] h-[14px] rounded-b-full bg-[#3d3d3d]" />
                <div className="ml-[4px] w-px flex-1 bg-[#bdbdbd]" />
              </div>
              <Chart />
            </div>

            <div className="h-[64px] shrink-0 flex">
              <div className="w-[23px] bg-[#dcdcdc]" />
              <Keyboard />
            </div>

            <div className="h-[31px] shrink-0 bg-[#e0e0e0] flex items-center border-b border-[#8a8a8a]">
              <span className="ml-[8px] text-[16px] w-[17px]">r</span>
              <div className="w-[40px] h-[26px] rounded-[8px] bg-[#f9a52f] flex items-center justify-center gap-[2px]">
                <div className="w-[14px] h-[19px] rounded-[5px] bg-[#a8701f]" />
                <div className="w-[14px] h-[19px] rounded-[5px] bg-[#a8701f]" />
              </div>
              <div className="ml-[15px] w-[23px] grid grid-cols-2 gap-[2px]">
                <div className="h-[10px] rounded-[3px] bg-[#8f8f8f]" />
                <div className="h-[10px] rounded-[3px] bg-[#8f8f8f]" />
                <div className="h-[10px] rounded-[3px] bg-[#8f8f8f]" />
                <div className="h-[10px] rounded-[3px] bg-[#8f8f8f]" />
              </div>
              <svg viewBox="0 0 36 20" className="ml-[18px] w-[36px] h-[20px]">
                <path d="M3 3 C10 18 22 22 33 9" fill="none" stroke="#111" strokeWidth="2" />
                <circle cx="3" cy="3" r="2.6" fill="#111" />
                <circle cx="33" cy="9" r="2.6" fill="#111" />
              </svg>
              <div className="ml-[9px] w-[41px] h-[26px] rounded-[8px] bg-[#f9a52f] flex items-center justify-center">
                <svg viewBox="0 0 34 19" className="w-[34px] h-[19px]">
                  <rect x="0.5" y="0.5" width="33" height="18" fill="#fdb54a" stroke="#5a3a10" />
                  <path d="M8 0 V19 M17 0 V19 M25 0 V19" stroke="#5a3a10" />
                  <path d="M5 0 H11 V11 H5 Z M14 0 H20 V11 H14 Z M23 0 H29 V11 H23 Z" fill="#2a2015" />
                </svg>
              </div>
              <div className="ml-[11px] w-[13px] h-[13px] rounded-l-full bg-[#444]" />
              <div className="ml-px w-[1077px] h-[10px] bg-[#444]" />
              <div className="ml-px w-[10px] h-[13px] rounded-r-full bg-[#444]" />
              <div className="ml-[13px] grid grid-cols-2 gap-x-[2px] gap-y-[2px]">
                {[0, 1, 2, 3, 4, 5].map((i) => (
                  <div key={i} className="w-[5px] h-[6px] bg-[#333]" />
                ))}
              </div>
            </div>

            <div className="h-[282px] shrink-0 flex relative bg-[#878787]">
              <Trans />
              <Lfo kind="step" ratio={[-43, "0.42"]} smooth={[-38, "34.5"]} amp={[-75, "18.3"]} />
              <Band
                title="Adjust me"
                width="w-[175px]"
                labelW="w-[72px]"
                gap="ml-[8px]"
                rows={[["freq", "1.96 kHz"], ["gain", "4.44 dB"], ["bw", "1 oct"], ["poles", "2"]]}
              />
              <Band
                title="Band Stop"
                width="w-[174px]"
                labelW="w-[71px]"
                gap="ml-[8px]"
                rows={[["freq", "2.77 kHz"], ["bw", "1 oct"], ["poles", "4"]]}
              />
              <Lfo kind="step2" ratio={[-31, "0.65"]} smooth={[-56, "26.7"]} amp={[-32, "35.9"]} />
              <Lfo kind="tri" last ratio={[-41, "0.38"]} smooth={[-69, "21.4"]} amp={[-50, "28.3"]} />
              <div className="w-[90px] h-full flex items-center justify-center shrink-0">
                <div className="w-[56px] h-[56px] mt-[-2px] rounded-[6px] bg-[#a3a3a3] flex items-center justify-center">
                  <svg viewBox="0 0 40 40" className="w-[40px] h-[40px]">
                    <path d="M16 0 H24 V16 H40 V24 H24 V40 H16 V24 H0 V16 H16 Z" fill="#878787" />
                  </svg>
                </div>
              </div>
              <Output />
              <Overlay />
            </div>

            <div className="flex-1 bg-[#8a8a8a] flex items-center border-b-2 border-[#6f7174]">
              <div className="ml-[573px] w-[772px] h-[9px] rounded-full bg-black" />
            </div>
          </div>
        </div>
        <div className="flex-1 bg-[#28292c] bg-[repeating-linear-gradient(90deg,#36383c_0,#36383c_1px,transparent_1px,transparent_34px)]">
          <div className="ml-[586px] w-px h-full bg-[#c8c8c8]" />
        </div>
      </div>

      {/* right of the window */}
      <div className="flex-1 h-full flex flex-col bg-[#292a2e]">
        <div className="h-[47px] bg-[#2b2d30] border-t-2 border-[#1d1e20] border-b-2 border-b-[#111214]" />
        <div className="h-[31px] bg-[#4d5256]" />
        <div className="h-[31px] bg-[#35393d] border-b border-[#25272a]" />
        <div className="h-[201px] border-b-2 border-[#4a4a4c]" />
        <div className="h-[65px]" />
        <div className="h-[33px] bg-[#336cae]" />
      </div>
    </div>
  );
}
